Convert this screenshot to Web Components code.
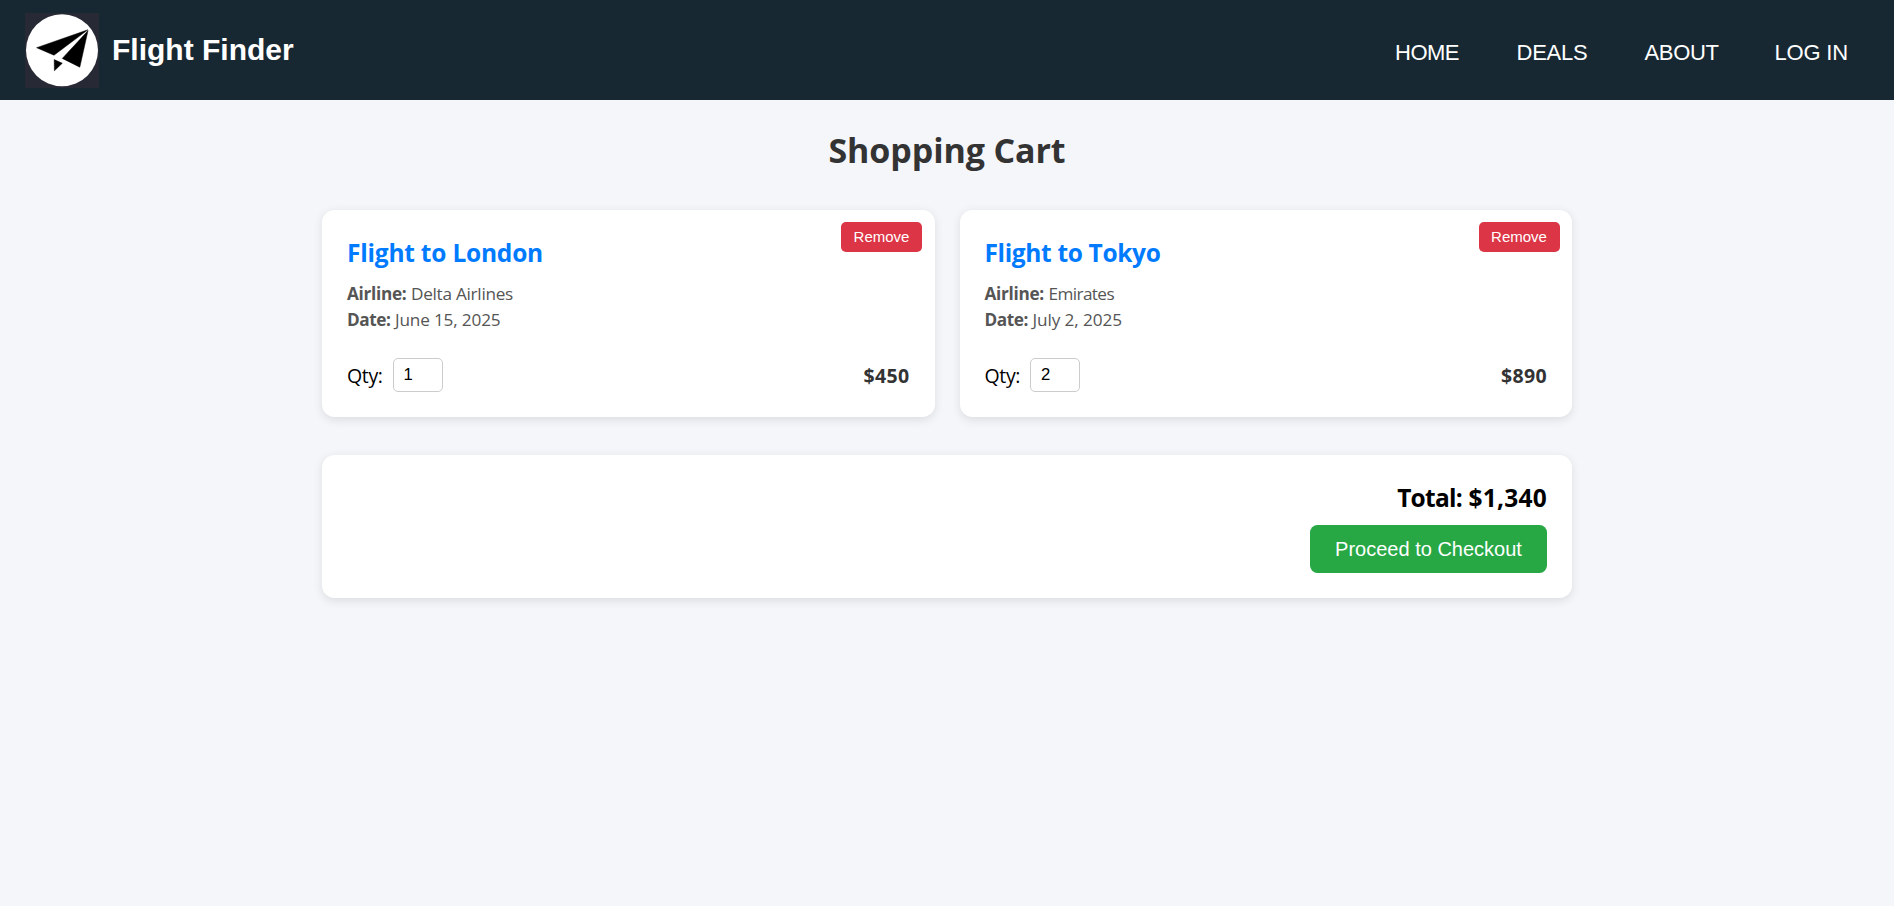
<!DOCTYPE html>
<html lang="en">
<head>
<meta charset="utf-8">
<title>Flight Finder</title>
<style>
body{margin:0;min-height:100vh;background:#f4f6fa;font-family:"Open Sans","Noto Sans",sans-serif;color:#000}
</style>
</head>
<body>
<site-header>
  <nav-link style="--gap:57.5px"><fit-text w="64">HOME</fit-text></nav-link>
  <nav-link style="--gap:57px"><fit-text w="71">DEALS</fit-text></nav-link>
  <nav-link style="--gap:56px"><fit-text w="74">ABOUT</fit-text></nav-link>
  <nav-link style="--gap:0px"><fit-text w="73.5">LOG IN</fit-text></nav-link>
</site-header>
<cart-page>
  <fit-text slot="heading" w="237">Shopping Cart</fit-text>
  <flight-card qty="1">
    <fit-text slot="title" w="196">Flight to London</fit-text>
    <fit-text slot="airline" w="102">Delta Airlines</fit-text>
    <fit-text slot="date" w="105.5">June 15, 2025</fit-text>
    <fit-text slot="price" w="46">$450</fit-text>
  </flight-card>
  <flight-card qty="2">
    <fit-text slot="title" w="176">Flight to Tokyo</fit-text>
    <fit-text slot="airline" w="65.5">Emirates</fit-text>
    <fit-text slot="date" w="89.5">July 2, 2025</fit-text>
    <fit-text slot="price" w="46">$890</fit-text>
  </flight-card>
  <cart-summary slot="summary"><fit-text w="65">Total:</fit-text> <fit-text w="78.5">$1,340</fit-text></cart-summary>
</cart-page>
<script>
const define = (name, html, setup) => customElements.define(name, class extends HTMLElement {
  connectedCallback() {
    if (this.shadowRoot) return;
    this.attachShadow({ mode: 'open' }).innerHTML = html;
    if (setup) setup(this, this.shadowRoot);
  }
});

define('flight-logo', `
<style>:host{display:block;width:74px;height:75px}svg{display:block}</style>
<svg width="74" height="75" viewBox="25 13 74 75">
  <rect x="25" y="13" width="74" height="75" fill="#272a35"/>
  <circle cx="62" cy="50.2" r="36" fill="#fff"/>
  <g fill="#000" stroke="#000" stroke-width=".5" stroke-linejoin="round">
    <path d="M36.6 47.7L87.9 29.8 54 55.2Z"/>
    <path d="M88 30.6L79.8 67.2 62.3 58.4Z"/>
    <path d="M54.2 59.6L62.3 63.2 54.4 70.8Z"/>
  </g>
  <path d="M86.6 31.6L55 58.2 60 59.6Z" fill="#fff"/>
</svg>`);

define('nav-link', `
<style>:host{display:block;margin-right:var(--gap)}a{color:#fff;text-decoration:none}</style>
<a><slot></slot></a>`);

define('site-header', `
<style>
:host{display:flex;box-sizing:border-box;height:100px;padding:0 46px 0 25px;align-items:center;justify-content:space-between;background:#182833;color:#fff;font-family:"Liberation Sans",Arial,sans-serif}
.brand{display:flex;align-items:center;gap:13px;font-size:30px;font-weight:700;line-height:34px}
.brand span{margin-top:0}
nav{display:flex;font-size:22px;line-height:26px;margin-top:5px}
</style>
<div class="brand"><flight-logo></flight-logo><span>Flight Finder</span></div>
<nav><slot></slot></nav>`);

define('cart-page', `
<style>
:host{display:block;width:1250px;margin:0 auto;padding-top:27px}
h1{margin:0 0 37px;font-size:34px;line-height:46px;font-weight:700;text-align:center;color:#333}
.grid{display:grid;grid-template-columns:1fr 1fr;gap:25px;margin-bottom:38px}
</style>
<h1><slot name="heading"></slot></h1>
<div class="grid"><slot></slot></div>
<slot name="summary"></slot>`);

define('flight-card', `
<style>
:host{display:block;position:relative;box-sizing:border-box;height:207px;padding:25px;background:#fff;border-radius:12.5px;box-shadow:0 2.5px 10px rgba(0,0,0,.1)}
h2{margin:0 0 11px;font-size:24.5px;line-height:35px;color:#007bff}
p{margin:0;display:flex;gap:4.5px;font-size:17.2px;line-height:26px;color:#555}
.row{display:flex;justify-content:space-between;align-items:center;height:34px;margin-top:25px;font-size:19.5px}
label{display:flex;align-items:center;gap:10px}
input{box-sizing:border-box;width:50px;height:34px;margin:0;padding:0 10px 1px;border:1px solid #ccc;border-radius:5px;font:16.7px "Liberation Sans",Arial,sans-serif;color:#000;background:#fff}
.price{font-weight:700;color:#333}
button{position:absolute;top:12px;right:12.5px;width:81px;height:30px;padding:0 0 2px;border:0;border-radius:5px;background:#dc3545;color:#fff;font:15px "Liberation Sans",Arial,sans-serif}
</style>
<button>Remove</button>
<h2><slot name="title"></slot></h2>
<p><b><fit-text w="59.5">Airline:</fit-text></b><slot name="airline"></slot></p>
<p><b><fit-text w="43.5">Date:</fit-text></b><slot name="date"></slot></p>
<div class="row"><label><fit-text w="35.6">Qty:</fit-text><input type="text"></label><span class="price"><slot name="price"></slot></span></div>`,
(host, root) => { root.querySelector('input').value = host.getAttribute('qty'); });

define('cart-summary', `
<style>
:host{display:flex;flex-direction:column;align-items:flex-end;box-sizing:border-box;height:143px;padding:25px;background:#fff;border-radius:12.5px;box-shadow:0 2.5px 10px rgba(0,0,0,.1)}
.total{font-size:24.5px;line-height:35px;font-weight:700;margin-bottom:10px}
button{width:237px;height:48px;padding:0;border:0;border-radius:7.5px;background:#28a745;color:#fff;font:20px "Liberation Sans",Arial,sans-serif}
</style>
<div class="total"><slot></slot></div>
<button>Proceed to Checkout</button>`);

// Tracks its text so that the run occupies the width given by the w attribute.
define('fit-text', `
<style>:host{display:inline-block;white-space:nowrap}</style><slot></slot>`,
host => requestAnimationFrame(() => {
  const w = +host.getAttribute('w');
  const natural = host.getBoundingClientRect().width;
  host.style.letterSpacing = ((w - natural) / host.textContent.length) + 'px';
}));
</script>
</body>
</html>
